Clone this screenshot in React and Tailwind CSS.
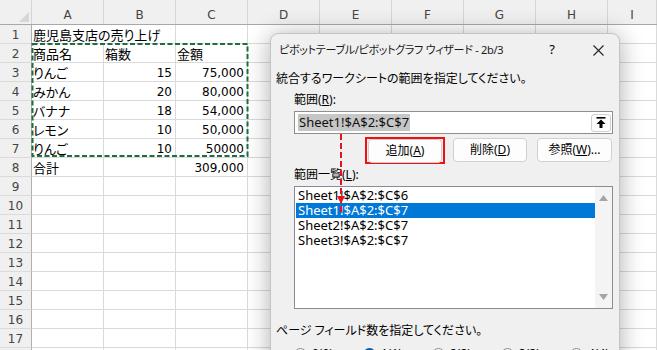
import React from "react";

const COLS = ["A", "B", "C", "D", "E", "F", "G", "H", "I"];

const DATA = {
  1: ["鹿児島支店の売り上げ", "", ""],
  2: ["商品名", "箱数", "金額"],
  3: ["りんご", "15", "75,000"],
  4: ["みかん", "20", "80,000"],
  5: ["バナナ", "18", "54,000"],
  6: ["レモン", "10", "50,000"],
  7: ["りんご", "10", "50000"],
  8: ["合計", "", "309,000"],
};

const RANGES = [
  "Sheet1!$A$2:$C$6",
  "Sheet1!$A$2:$C$7",
  "Sheet2!$A$2:$C$7",
  "Sheet3!$A$2:$C$7",
];

function isNumber(v) {
  return /^[0-9,]+$/.test(v);
}

function Cell({ value, last, noRightLine }) {
  const num = isNumber(value);
  return (
    <div
      className={`${last ? "flex-1" : "w-[72px] shrink-0"} h-[19px] border-b border-[#dadada] ${
        noRightLine ? "border-r-0" : "border-r"
      } pt-[3px] leading-[15px] whitespace-nowrap ${
        num ? "text-right pr-[3px] text-[12px]" : "pl-[1px] text-[13px] [font-feature-settings:'palt']"
      }`}
    >
      {value}
    </div>
  );
}

function Sheet() {
  const rows = Array.from({ length: 18 }, (_, i) => i + 1);
  return (
    <div className="font-['DejaVu_Sans','Noto_Sans_CJK_JP',sans-serif] text-[12px] text-black">
      {/* column headers */}
      <div className="flex h-[25px] bg-[#f0f0f0] border-b border-[#a8a8a8]">
        <div className="relative w-[32px] shrink-0 border-r border-[#d4d4d4]">
          <svg className="absolute left-[19px] top-[12px]" width="11" height="10" viewBox="0 0 11 10">
            <polygon points="10,0 10,10 0,10" fill="#d6d6d6" />
          </svg>
        </div>
        {COLS.map((c, i) => (
          <div
            key={c}
            className={`${i === COLS.length - 1 ? "flex-1" : "w-[72px] shrink-0"} border-r border-[#d4d4d4] text-center pt-[6px] leading-[18px] text-[#444]`}
          >
            {c}
          </div>
        ))}
      </div>
      {rows.map((r) => {
        const vals = DATA[r] || ["", "", ""];
        return (
          <div key={r} className="flex">
            <div className="w-[32px] shrink-0 h-[19px] bg-[#f0f0f0] border-r border-r-[#b0b0b0] border-b border-b-[#dadada] text-center pt-[3px] leading-[15px] text-[#444]">
              {r}
            </div>
            <Cell value={vals[0]} noRightLine={r === 1} />
            <Cell value={vals[1]} />
            <Cell value={vals[2]} />
            {COLS.slice(3).map((c, i) => (
              <Cell key={c} value="" last={i === 5} />
            ))}
          </div>
        );
      })}
    </div>
  );
}

function Btn({ children, className = "" }) {
  return (
    <div
      className={`h-[24px] rounded-[4px] border border-[#d0d0d0] bg-[#fdfdfd] flex items-center justify-center text-[12px] ${className}`}
    >
      {children}
    </div>
  );
}

function Radio({ label, checked }) {
  return (
    <div className="w-[69px] shrink-0 flex items-center">
      {checked ? (
        <div className="w-[13px] h-[13px] rounded-full bg-[#005fb8] flex items-center justify-center">
          <div className="w-[5px] h-[5px] rounded-full bg-white" />
        </div>
      ) : (
        <div className="w-[13px] h-[13px] rounded-full border border-[#8a8a8a] bg-[#fbfbfb]" />
      )}
      <span className="ml-[5px] text-[12px]">{label}</span>
    </div>
  );
}

function Dialog() {
  return (
    <div className="absolute left-[270px] top-[33px] w-[350px] h-[340px] rounded-[8px] border border-[#c4c4c4] bg-[#f0f0f0] shadow-[0_2px_24px_rgba(0,0,0,0.32)] font-['Noto_Sans','Noto_Sans_CJK_JP',sans-serif] text-[12px] text-black [font-feature-settings:'palt']">
      {/* title bar */}
      <div className="flex h-[32px] items-center">
        <div className="flex-1 min-w-0 pl-[8px] whitespace-nowrap text-[11px] tracking-[-0.3px] text-[#1a1a1a]">
          ピボットテーブル/ピボットグラフ ウィザード - 2b/3
        </div>
        <div className="w-[50px] shrink-0 text-center text-[13px]">?</div>
        <div className="w-[42px] shrink-0 flex justify-center">
          <svg width="11" height="11" viewBox="0 0 11 11">
            <path d="M0.5 0.5 L10.5 10.5 M10.5 0.5 L0.5 10.5" stroke="#222" strokeWidth="1.1" />
          </svg>
        </div>
      </div>

      <div className="mt-[6px] ml-[5px] leading-[14px]">統合するワークシートの範囲を指定してください。</div>
      <div className="mt-[7px] ml-[23px] leading-[14px]">
        範囲(<span className="underline">R</span>):
      </div>

      {/* range input */}
      <div className="mt-[4px] ml-[23px] w-[319px] h-[23px] bg-white border border-[#8e8e8e] flex items-center justify-between pl-[3px] pr-[1px]">
        <span className="bg-[#c6c6c6] text-[13px] leading-[17px] px-[1px] text-[#111]">Sheet1!$A$2:$C$7</span>
        <div className="w-[20px] h-[18px] rounded-[3px] border border-[#d0d0d0] bg-[#fdfdfd] flex items-center justify-center">
          <svg width="10" height="11" viewBox="0 0 10 11">
            <rect x="0.5" y="0" width="9" height="1.6" fill="#000" />
            <polygon points="5,2.5 9.5,7 0.5,7" fill="#000" />
            <rect x="3.5" y="6.5" width="3" height="4.5" fill="#000" />
          </svg>
        </div>
      </div>

      {/* buttons */}
      <div className="mt-[3px] flex items-start pl-[94px]">
        <div className="w-[80px] h-[27px] border-2 border-[#f01010] flex items-center justify-center">
          <Btn className="w-[74px] h-[23px]">
            追加(<span className="underline">A</span>)
          </Btn>
        </div>
        <Btn className="w-[74px] ml-[8px] mt-[1px]">
          削除(<span className="underline">D</span>)
        </Btn>
        <Btn className="w-[75px] ml-[10px] mt-[1px]">
          参照(<span className="underline">W</span>)...
        </Btn>
      </div>

      <div className="mt-[4px] ml-[23px] leading-[14px]">
        範囲一覧(<span className="underline">L</span>):
      </div>

      {/* listbox */}
      <div className="mt-[4px] ml-[23px] w-[319px] h-[123px] bg-white border border-[#8a8a9a] flex">
        <div className="flex-1 pt-[1px] pl-[1px]">
          {RANGES.map((r, i) => (
            <div
              key={r}
              className={`h-[15px] leading-[15px] pl-[2px] text-[13px] ${
                i === 1 ? "bg-[#0078d7] text-white" : "text-black"
              }`}
            >
              {r}
            </div>
          ))}
        </div>
        <div className="w-[17px] bg-[#f4f4f4] flex flex-col items-center justify-between py-[8px]">
          <svg width="9" height="6" viewBox="0 0 9 6">
            <polygon points="4.5,0 9,6 0,6" fill="#a5a5a5" />
          </svg>
          <svg width="9" height="6" viewBox="0 0 9 6">
            <polygon points="0,0 9,0 4.5,6" fill="#a5a5a5" />
          </svg>
        </div>
      </div>

      <div className="mt-[15px] ml-[5px] leading-[14px]">ページ フィールド数を指定してください。</div>

      <div className="mt-[7px] ml-[23px] flex">
        <Radio label="0(0)" />
        <Radio label="1(1)" checked />
        <Radio label="2(2)" />
        <Radio label="3(3)" />
        <Radio label="4(4)" />
      </div>
    </div>
  );
}

export default function App() {
  return (
    <div className="relative w-[657px] h-[350px] overflow-hidden bg-white">
      <Sheet />

      {/* copy marquee around A2:C7 */}
      <svg className="absolute left-[31px] top-[43px]" width="218" height="115" viewBox="0 0 218 115">
        <rect x="1.5" y="1" width="215" height="112" fill="none" stroke="#1f6e3e" strokeWidth="2" strokeDasharray="5 2.5" />
      </svg>

      <Dialog />

      {/* red dashed arrow */}
      <svg className="absolute left-[336px] top-[132px]" width="10" height="82" viewBox="0 0 10 82">
        <line x1="5" y1="2" x2="5" y2="80" stroke="#e8141c" strokeWidth="2" strokeDasharray="6 3" />
        <polygon points="1,64 9,64 5,72" fill="#e8141c" />
      </svg>
    </div>
  );
}
